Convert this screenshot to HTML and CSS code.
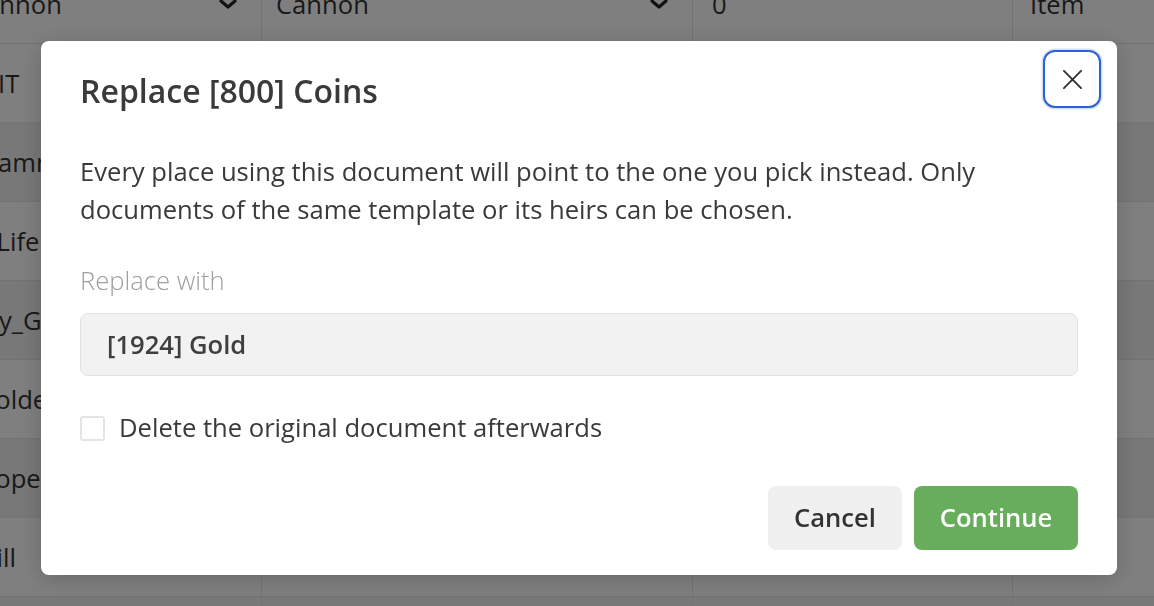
FILE: index.html
```html
<!DOCTYPE html>
<html lang="en">
<head>
<meta charset="utf-8">
<title>Replace document</title>
<link rel="stylesheet" href="styles.css">
</head>
<body>
<div class="page">
  <div class="grid">
    <div class="row">
      <div class="cell c1"><span class="sel">Cannon</span><svg class="chev" viewBox="0 0 18 10"><path d="M2 2l7 6 7-6" fill="none" stroke="#222" stroke-width="3.2" stroke-linecap="round" stroke-linejoin="round"/></svg></div>
      <div class="cell c2"><span class="sel">Cannon</span><svg class="chev" viewBox="0 0 18 10"><path d="M2 2l7 6 7-6" fill="none" stroke="#222" stroke-width="3.2" stroke-linecap="round" stroke-linejoin="round"/></svg></div>
      <div class="cell c3">0</div>
      <div class="cell c4">Item</div>
    </div>
    <div class="row"><div class="cell c1">EXIT</div><div class="cell c2">Exit</div><div class="cell c3">0</div><div class="cell c4">Item</div></div>
    <div class="row"><div class="cell c1">Grammophone</div><div class="cell c2">Grammophone</div><div class="cell c3">0</div><div class="cell c4">Item</div></div>
    <div class="row"><div class="cell c1">ExLife</div><div class="cell c2">Life</div><div class="cell c3">0</div><div class="cell c4">Item</div></div>
    <div class="row"><div class="cell c1">Key_Gold</div><div class="cell c2">Key</div><div class="cell c3">0</div><div class="cell c4">Item</div></div>
    <div class="row"><div class="cell c1">Scolder</div><div class="cell c2">Scolder</div><div class="cell c3">0</div><div class="cell c4">Item</div></div>
    <div class="row"><div class="cell c1">Scope</div><div class="cell c2">Scope</div><div class="cell c3">0</div><div class="cell c4">Item</div></div>
    <div class="row"><div class="cell c1">Skill</div><div class="cell c2">Skill</div><div class="cell c3">0</div><div class="cell c4">Item</div></div>
    <div class="row"><div class="cell c1">Coins</div><div class="cell c2">Coins</div><div class="cell c3">0</div><div class="cell c4">Item</div></div>
  </div>
</div>

<div class="overlay">
  <div class="dialog">
    <div class="head">
      <h2 class="title">Replace [800] Coins</h2>
      <button class="close" aria-label="Close">
        <svg viewBox="0 0 20 20" width="20" height="20"><path d="M1 1l18 18M19 1L1 19" stroke="#333" stroke-width="2" stroke-linecap="round"/></svg>
      </button>
    </div>
    <p class="desc">Every place using this document will point to the one you pick instead. Only documents of the same template or its heirs can be chosen.</p>
    <div class="label">Replace with</div>
    <div class="field">[1924] Gold</div>
    <label class="check"><span class="box"></span>Delete the original document afterwards</label>
    <div class="actions">
      <button class="btn cancel">Cancel</button>
      <button class="btn primary">Continue</button>
    </div>
  </div>
</div>
</body>
</html>
```

FILE: styles.css
```css
html, body {
  margin: 0;
  padding: 0;
  width: 1154px;
  height: 606px;
  overflow: hidden;
  background: #fff;
  font-family: "Open Sans", "Noto Sans", sans-serif;
  color: #333;
}

.page {
  overflow: hidden;
  height: 606px;
}

.grid {
  margin-left: -45px;
  margin-top: -35px;
  width: 1260px;
}

.row {
  display: flex;
  height: 79px;
  border-bottom: 1px solid #e6e6e6;
  box-sizing: border-box;
  background: #fff;
}
.row:nth-child(odd) { background: #f0f0f0; }
.row:first-child { background: #fff; }

.cell {
  display: flex;
  align-items: center;
  padding: 0 14px;
  box-sizing: border-box;
  font-size: 25.6px;
  color: #333;
  white-space: nowrap;
  overflow: hidden;
  border-right: 1px solid #e6e6e6;
}
.c1 { width: 307px; }
.c2 { width: 431px; }
.c3 { width: 320px; padding-left: 19px; }
.c4 { width: 202px; padding-left: 17px; border-right: 0; }

.sel { flex: 1; }
.chev { width: 18px; height: 10px; margin-right: 10px; }

.overlay {
  position: fixed;
  inset: 0;
  background: rgba(0, 0, 0, 0.5);
}

.dialog {
  position: absolute;
  left: 41px;
  top: 41px;
  width: 1076px;
  height: 534px;
  box-sizing: border-box;
  background: #fff;
  border-radius: 8px;
  padding: 0 39px 25px 39px;
  box-shadow: 0 4px 24px rgba(0, 0, 0, 0.18);
  display: flex;
  flex-direction: column;
}

.head {
  display: flex;
  align-items: flex-start;
  justify-content: space-between;
  margin-right: -23px;
  height: 70px;
}

.title {
  margin: 30px 0 0 0;
  font-size: 32px;
  font-weight: 600;
  color: #3a3a3a;
  line-height: 40px;
}

.close {
  margin-top: 9px;
  width: 58px;
  height: 58px;
  flex: none;
  border: 2px solid #2c63d4;
  border-radius: 12px;
  background: #fff;
  box-shadow: 0 0 0 1.5px rgba(44, 99, 212, 0.2);
  display: flex;
  align-items: center;
  justify-content: center;
  padding: 0;
}
.close svg { width: 19px; height: 19px; }

.desc {
  margin: 42px 0 0 0;
  font-size: 25.6px;
  line-height: 38.4px;
  color: #3a3a3a;
}

.label {
  margin-top: 32px;
  font-size: 25.6px;
  font-weight: 300;
  color: #9e9e9e;
  line-height: 38.4px;
}

.field {
  margin-top: 13px;
  height: 63px;
  flex: none;
  box-sizing: border-box;
  border: 1px solid #e3e3e3;
  border-radius: 8px;
  background: #f2f2f2;
  padding: 0 26px;
  display: flex;
  align-items: center;
  font-size: 25.6px;
  font-weight: 600;
  color: #3f3f3f;
}

.check {
  margin-top: 33px;
  display: flex;
  align-items: center;
  font-size: 25.6px;
  color: #3a3a3a;
  line-height: 38.4px;
}
.box {
  width: 25px;
  height: 25px;
  flex: none;
  box-sizing: border-box;
  border: 2px solid #e4e4e4;
  border-radius: 3px;
  margin-right: 14px;
  background: #fff;
}

.actions {
  margin-top: auto;
  display: flex;
  justify-content: flex-end;
  gap: 12px;
}

.btn {
  height: 64px;
  border: 0;
  border-radius: 8px;
  font-family: "Open Sans", "Noto Sans", sans-serif;
  font-size: 25.6px;
  font-weight: 600;
  padding: 0 0 2px 0;
}
.cancel {
  background: #f0f0f0;
  color: #333;
  width: 134px;
}
.primary {
  background: #68ad5c;
  color: #fff;
  width: 164px;
}
```
